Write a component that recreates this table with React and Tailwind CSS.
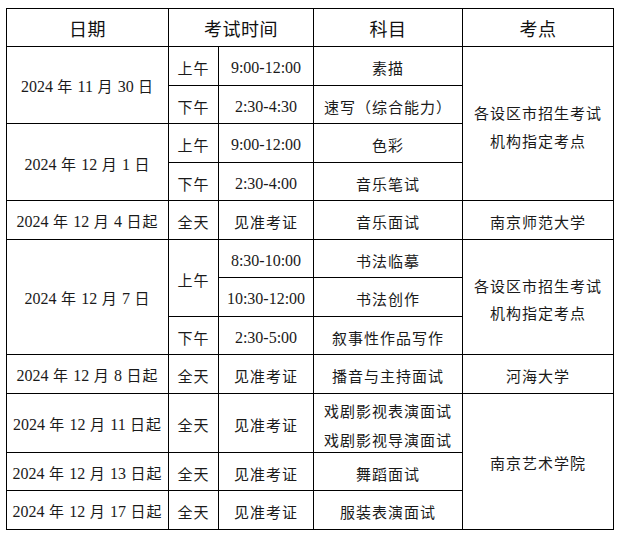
import React from "react";

function Mixed({ text }) {
  const parts = text.split(/([0-9][0-9:\-]*)/);
  return (
    <span className="whitespace-pre">
      {parts.map((p, i) =>
        /^[0-9]/.test(p) ? (
          <span key={i} className="font-['Liberation_Serif',serif] text-[16px] tracking-normal">
            {p}
          </span>
        ) : (
          <span key={i}>{p}</span>
        )
      )}
    </span>
  );
}

function C({ children, className = "" }) {
  return (
    <div className={"bg-white flex items-center justify-center text-center " + className}>
      {children}
    </div>
  );
}

function H({ children, className = "" }) {
  return (
    <div className={"bg-white flex items-center justify-center text-[18px] tracking-[0.5px] text-[#111] " + className}>
      {children}
    </div>
  );
}

export default function App() {
  return (
    <div className="w-[620px] h-[537px] bg-white font-['Noto_Sans_CJK_SC',sans-serif]">
      <div className="ml-[6px] pt-[8px]">
        <div className="w-fit grid gap-px p-px bg-black grid-cols-[161px_49px_94px_148px_150px] grid-rows-[37px_38px_37px_38px_37px_38px_37px_38px_37px_38px_58px_37px_38px] text-[15px] tracking-[1px] text-[#1a1a1a] leading-none">
          <H>日期</H>
          <H className="col-span-2">考试时间</H>
          <H>科目</H>
          <H>考点</H>

          <C className="row-span-2 pt-[2px]"><Mixed text="2024 年 11 月 30 日" /></C>
          <C className="pt-[3px]">上午</C>
          <C className="pt-[3px]"><Mixed text="9:00-12:00" /></C>
          <C className="pt-[3px]">素描</C>
          <C className="row-span-4 flex-col leading-[28px] pt-[6px]">
            <div>各设区市招生考试</div>
            <div>机构指定考点</div>
          </C>

          <C className="pt-[3px]">下午</C>
          <C className="pt-[3px]"><Mixed text="2:30-4:30" /></C>
          <C className="pt-[3px]">速写（综合能力）</C>

          <C className="row-span-2 pt-[4px]"><Mixed text="2024 年 12 月 1 日" /></C>
          <C className="pt-[3px]">上午</C>
          <C className="pt-[3px]"><Mixed text="9:00-12:00" /></C>
          <C className="pt-[3px]">色彩</C>

          <C className="pt-[3px]">下午</C>
          <C className="pt-[3px]"><Mixed text="2:30-4:00" /></C>
          <C className="pt-[3px]">音乐笔试</C>

          <C className="pt-[3px]"><Mixed text="2024 年 12 月 4 日起" /></C>
          <C className="pt-[3px]">全天</C>
          <C className="pt-[3px]">见准考证</C>
          <C className="pt-[3px]">音乐面试</C>
          <C className="pt-[3px]">南京师范大学</C>

          <C className="row-span-3 pt-[2px]"><Mixed text="2024 年 12 月 7 日" /></C>
          <C className="row-span-2 pt-[2px]">上午</C>
          <C className="pt-[3px]"><Mixed text="8:30-10:00" /></C>
          <C className="pt-[3px]">书法临摹</C>
          <C className="row-span-3 flex-col leading-[27px] pt-[4px]">
            <div>各设区市招生考试</div>
            <div>机构指定考点</div>
          </C>

          <C className="pt-[3px]"><Mixed text="10:30-12:00" /></C>
          <C className="pt-[3px]">书法创作</C>

          <C className="pt-[3px]">下午</C>
          <C className="pt-[3px]"><Mixed text="2:30-5:00" /></C>
          <C className="pt-[3px]">叙事性作品写作</C>

          <C className="pt-[3px]"><Mixed text="2024 年 12 月 8 日起" /></C>
          <C className="pt-[3px]">全天</C>
          <C className="pt-[3px]">见准考证</C>
          <C className="pt-[3px]">播音与主持面试</C>
          <C className="pt-[3px]">河海大学</C>

          <C className="pt-[2px]"><Mixed text="2024 年 12 月 11 日起" /></C>
          <C className="pt-[2px]">全天</C>
          <C className="pt-[2px]">见准考证</C>
          <C className="flex-col leading-[29px] pt-[4px]">
            <div>戏剧影视表演面试</div>
            <div>戏剧影视导演面试</div>
          </C>
          <C className="row-span-3 pt-[2px]">南京艺术学院</C>

          <C className="pt-[3px]"><Mixed text="2024 年 12 月 13 日起" /></C>
          <C className="pt-[3px]">全天</C>
          <C className="pt-[3px]">见准考证</C>
          <C className="pt-[3px]">舞蹈面试</C>

          <C className="pt-[3px]"><Mixed text="2024 年 12 月 17 日起" /></C>
          <C className="pt-[3px]">全天</C>
          <C className="pt-[3px]">见准考证</C>
          <C className="pt-[3px]">服装表演面试</C>
        </div>
      </div>
    </div>
  );
}
